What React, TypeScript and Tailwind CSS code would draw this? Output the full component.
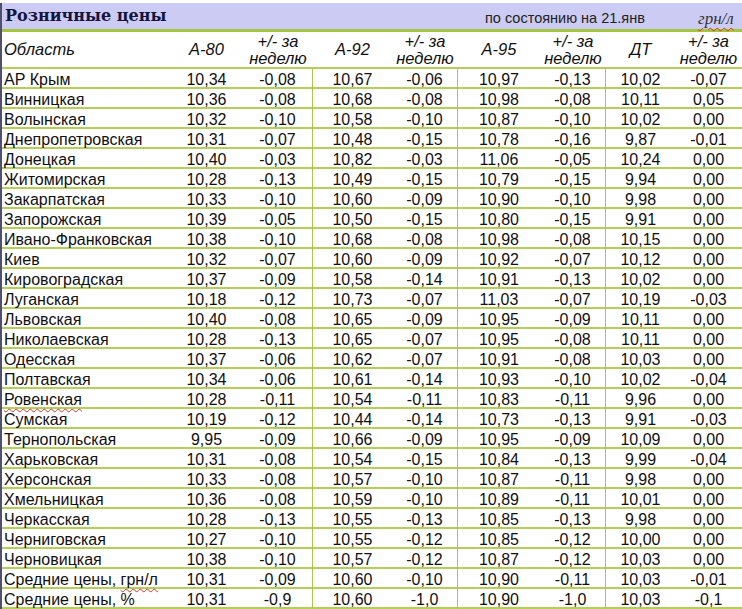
import React from "react";

const rows: string[][] = [
  ["АР Крым", "10,34", "-0,08", "10,67", "-0,06", "10,97", "-0,13", "10,02", "-0,07"],
  ["Винницкая", "10,36", "-0,08", "10,68", "-0,08", "10,98", "-0,08", "10,11", "0,05"],
  ["Волынская", "10,32", "-0,10", "10,58", "-0,10", "10,87", "-0,10", "10,02", "0,00"],
  ["Днепропетровская", "10,31", "-0,07", "10,48", "-0,15", "10,78", "-0,16", "9,87", "-0,01"],
  ["Донецкая", "10,40", "-0,03", "10,82", "-0,03", "11,06", "-0,05", "10,24", "0,00"],
  ["Житомирская", "10,28", "-0,13", "10,49", "-0,15", "10,79", "-0,15", "9,94", "0,00"],
  ["Закарпатская", "10,33", "-0,10", "10,60", "-0,09", "10,90", "-0,10", "9,98", "0,00"],
  ["Запорожская", "10,39", "-0,05", "10,50", "-0,15", "10,80", "-0,15", "9,91", "0,00"],
  ["Ивано-Франковская", "10,38", "-0,10", "10,68", "-0,08", "10,98", "-0,08", "10,15", "0,00"],
  ["Киев", "10,32", "-0,07", "10,60", "-0,09", "10,92", "-0,07", "10,12", "0,00"],
  ["Кировоградская", "10,37", "-0,09", "10,58", "-0,14", "10,91", "-0,13", "10,02", "0,00"],
  ["Луганская", "10,18", "-0,12", "10,73", "-0,07", "11,03", "-0,07", "10,19", "-0,03"],
  ["Львовская", "10,40", "-0,08", "10,65", "-0,09", "10,95", "-0,09", "10,11", "0,00"],
  ["Николаевская", "10,28", "-0,13", "10,65", "-0,07", "10,95", "-0,08", "10,11", "0,00"],
  ["Одесская", "10,37", "-0,06", "10,62", "-0,07", "10,91", "-0,08", "10,03", "0,00"],
  ["Полтавская", "10,34", "-0,06", "10,61", "-0,14", "10,93", "-0,10", "10,02", "-0,04"],
  ["Ровенская", "10,28", "-0,11", "10,54", "-0,11", "10,83", "-0,11", "9,96", "0,00"],
  ["Сумская", "10,19", "-0,12", "10,44", "-0,14", "10,73", "-0,13", "9,91", "-0,03"],
  ["Тернопольская", "9,95", "-0,09", "10,66", "-0,09", "10,95", "-0,09", "10,09", "0,00"],
  ["Харьковская", "10,31", "-0,08", "10,54", "-0,15", "10,84", "-0,13", "9,99", "-0,04"],
  ["Херсонская", "10,33", "-0,08", "10,57", "-0,10", "10,87", "-0,11", "9,98", "0,00"],
  ["Хмельницкая", "10,36", "-0,08", "10,59", "-0,10", "10,89", "-0,11", "10,01", "0,00"],
  ["Черкасская", "10,28", "-0,13", "10,55", "-0,13", "10,85", "-0,13", "9,98", "0,00"],
  ["Черниговская", "10,27", "-0,10", "10,55", "-0,12", "10,85", "-0,12", "10,00", "0,00"],
  ["Черновицкая", "10,38", "-0,10", "10,57", "-0,12", "10,87", "-0,12", "10,03", "0,00"],
  ["Средние цены, грн/л", "10,31", "-0,09", "10,60", "-0,10", "10,90", "-0,11", "10,03", "-0,01"],
  ["Средние цены, %", "10,31", "-0,9", "10,60", "-1,0", "10,90", "-1,0", "10,03", "-0,1"],
];

const gridCols = "grid grid-cols-[168px_73px_70px_79px_66px_82px_66px_69px_1fr]";
const wavy = "underline decoration-wavy decoration-[#e03030] decoration-1 underline-offset-[3px]";

function NameCell({ name }: { name: string }) {
  if (name === "Ровенская") {
    return <span className={wavy}>{name}</span>;
  }
  if (name === "Средние цены, грн/л") {
    return (
      <span>
        Средние цены, <span className={wavy}>грн/л</span>
      </span>
    );
  }
  return <span>{name}</span>;
}

function WeekHead() {
  return (
    <div className="flex flex-col items-center justify-center text-[16.5px] leading-[17px] italic pt-[1px]">
      <span>+/- за</span>
      <span>неделю</span>
    </div>
  );
}

export default function App() {
  return (
    <div
      className="w-[742px] h-[609px] overflow-hidden bg-white text-[#111]"
      style={{ fontFamily: '"Liberation Sans", Arial, sans-serif' }}
    >
      <div className="h-[3px] bg-white" />
      <div className="border-l-2 border-[#50506e]">
        <div className="h-[26px] bg-[#cbcbf3] flex items-center relative">
          <span
            className="pl-[3px] text-[16px] font-bold text-[#14143c]"
            style={{ fontFamily: '"DejaVu Serif", "Liberation Serif", serif' }}
          >
            Розничные цены
          </span>
          <span className="absolute left-[483px] top-[5px] text-[14.5px] text-[#222]">
            по состоянию на 21.янв
          </span>
          <span
            className={"absolute left-[696px] top-[3px] text-[17px] italic text-[#333] " + wavy}
            style={{ fontFamily: '"Liberation Serif", "Times New Roman", serif' }}
          >
            грн/л
          </span>
        </div>
        <div className="h-[3px] bg-[#a3c63e]" />
        <div className={gridCols + " h-[35px] italic text-[16.5px]"}>
          <div className="flex items-center pl-[2px]">Область</div>
          <div className="flex items-center justify-center">А-80</div>
          <WeekHead />
          <div className="flex items-center justify-center">А-92</div>
          <WeekHead />
          <div className="flex items-center justify-center">А-95</div>
          <WeekHead />
          <div className="flex items-center justify-center">ДТ</div>
          <WeekHead />
        </div>
        {rows.map((r, i) => (
          <div
            key={i}
            className={
              gridCols +
              " h-[20px] border-t-2 border-[#b3cf58] text-[16px] leading-[18px]" +
              (i === rows.length - 1 ? " border-b-2 h-[22px]" : "")
            }
          >
            <div className="pl-[2px] pt-[2px] whitespace-nowrap flex items-center">
              <NameCell name={r[0]} />
            </div>
            {r.slice(1).map((v, j) => (
              <div
                key={j}
                className={
                  "flex items-center justify-center pt-[2px]" +
                  (j === 1 || j === 3 || j === 5 ? " border-r border-[#a8c84a]" : "")
                }
              >
                {v}
              </div>
            ))}
          </div>
        ))}
      </div>
    </div>
  );
}
